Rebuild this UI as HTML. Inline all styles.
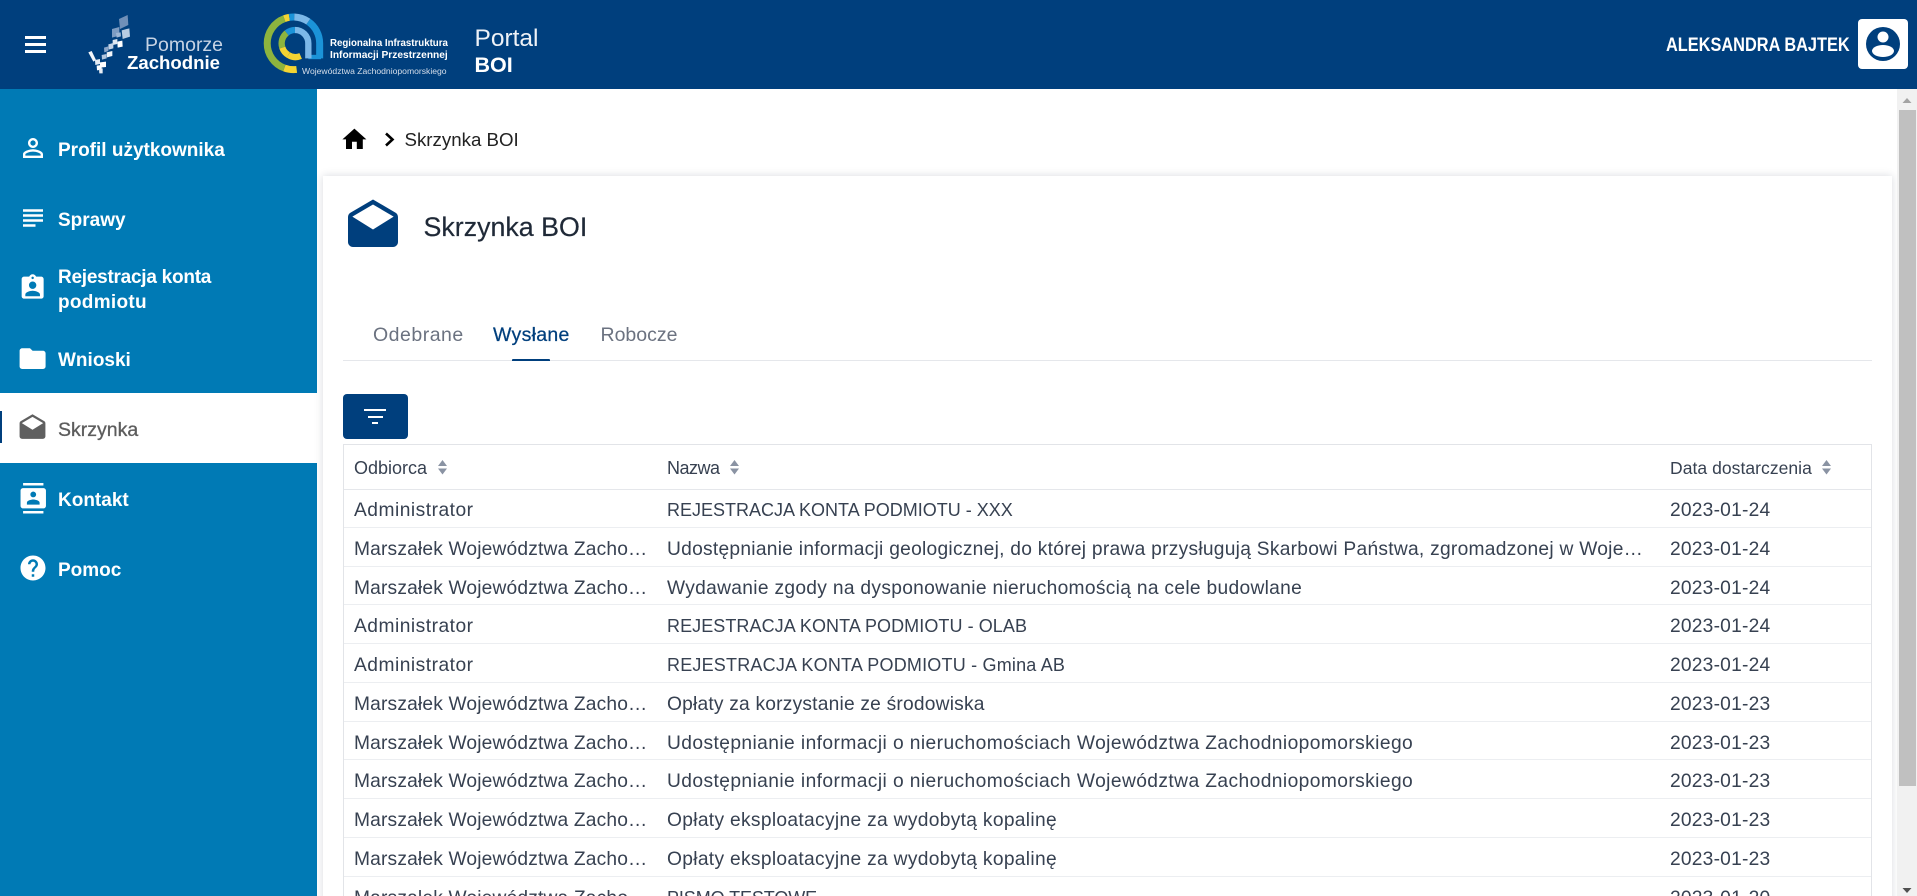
<!DOCTYPE html>
<html lang="pl"><head><meta charset="utf-8"><title>Skrzynka BOI</title>
<style>
html,body{margin:0;padding:0;width:1917px;height:896px;overflow:hidden;background:#fff;font-family:"Liberation Sans",sans-serif}
#root{position:relative;width:1917px;height:896px;overflow:hidden}
.a{position:absolute}
.t{position:absolute;white-space:nowrap;line-height:0}
header{position:absolute;left:0;top:0;width:1917px;height:89px;background:#003f7d;color:#fff}
aside{position:absolute;left:0;top:89px;width:317px;height:807px;background:#007ab5}
.n{font-size:19px;font-weight:700;color:#fff;left:58px}
.ic{position:absolute;fill:#fff}
.card{position:absolute;left:323px;top:176px;width:1569px;height:760px;background:#fff;box-shadow:0 0 8px rgba(40,50,80,.18)}
.tab{font-size:19.5px;top:335px;color:#6b7280}
.th{font-size:18px;top:468px;color:#374151}
.r{position:absolute;left:344px;width:1527px;height:38.75px;box-sizing:border-box;border-bottom:1px solid #eceef1;color:#374151}
.r span{position:absolute;top:22px;line-height:0;white-space:nowrap;font-size:19.2px}
.r .c1{left:10px;letter-spacing:.17px}.r .ad{letter-spacing:.5px}.r .c2{left:323px}.r .c3{left:1326px;letter-spacing:.22px}
.r .u{font-size:18px;top:21px}
.r .w{letter-spacing:.31px}.r .l{letter-spacing:.27px}.r .d{letter-spacing:.42px}.r .e{letter-spacing:.32px}.r .z{letter-spacing:.21px}
</style></head><body>
<div id="root">

<header>
<div class="a" style="left:25px;top:36px;width:21px;height:3px;background:#fff"></div>
<div class="a" style="left:25px;top:43px;width:21px;height:3px;background:#fff"></div>
<div class="a" style="left:25px;top:50px;width:21px;height:3px;background:#fff"></div>

<svg class="a" style="left:0;top:0" width="560" height="89">
<g transform="translate(80,5) scale(.3333)">
<polygon points="117,42 143,30 145,60 120,72" fill="#6f8fb8"/>
<polygon points="96,72 118,66 118,92 96,98" fill="#7d9cc2"/>
<polygon points="125,76 148,70 150,95 128,102" fill="#b9cce2"/>
<polygon points="108,84 122,82 123,94 110,98" fill="#9db6d4"/>
<polygon points="98,105 112,102 112,117 98,120" fill="#dfe8f2"/>
<polygon points="112,110 127,107 128,125 113,128" fill="#fff"/>
<polygon points="85,118 100,114 100,130 86,134" fill="#c3d3e6"/>
<polygon points="72,128 85,124 85,138 73,142" fill="#8aa5c8"/>
<polygon points="80,142 97,138 97,153 81,157" fill="#f2f5f9"/>
<polygon points="65,150 80,147 80,160 66,164" fill="#b3c6de"/>
<polygon points="25,142 35,138 48,165 40,170" fill="#f4f6fa"/>
<polygon points="45,165 60,162 60,177 46,180" fill="#e5ecf4"/>
<polygon points="60,172 78,170 78,186 60,188" fill="#fff"/>
<polygon points="50,182 65,180 65,194 51,196" fill="#fff"/>
<polygon points="57,192 68,190 68,205 58,205" fill="#e8eef5"/>
</g>
<g transform="translate(255,5) scale(.3333)" fill="none" stroke-width="21">
<path d="M125 193.4A79 79 0 0 1 88 189" stroke="#f4d432"/>
<path d="M88 189A79 79 0 0 1 88 41" stroke="#8db43e"/>
<path d="M88 41A79 79 0 0 1 103 37" stroke="#f4d432"/>
<path d="M103 37A79 79 0 0 1 118 36" stroke="#1b93d8"/>
<path d="M118 36A79 79 0 0 1 160 50" stroke="#7cb8e8"/>
<path d="M160 50A79 79 0 0 1 194 115V160" stroke="#1b93d8"/>
<path d="M198 156H160" stroke="#1b93d8" stroke-width="13"/>
<path d="M160 160V115A40 40 0 0 0 120 75" stroke="#7cb8e8" stroke-width="19"/>
<path d="M120 75A40 40 0 0 0 95 84" stroke="#1b93d8" stroke-width="19"/>
<path d="M95 84A40 40 0 0 0 82 128" stroke="#8db43e" stroke-width="19"/>
<path d="M82 128A40 40 0 0 0 100 150" stroke="#f4d432" stroke-width="19"/>
<path d="M100 150A40 40 0 0 0 137 153" stroke="#f4d432" stroke-width="19"/>
</g>
</svg>

<div class="t" style="left:145px;top:45px;font-size:19.5px;color:#c6d3e4">Pomorze</div>
<div class="t" style="left:127px;top:63px;font-size:18.6px;font-weight:700">Zachodnie</div>
<div class="t" style="left:330px;top:44px;font-size:9.7px;font-weight:700">Regionalna Infrastruktura</div>
<div class="t" style="left:330px;top:55.5px;font-size:10.2px;font-weight:700">Informacji Przestrzennej</div>
<div class="t" style="left:302px;top:71px;font-size:8.6px;color:#d5deea">Województwa Zachodniopomorskiego</div>
<div class="t" style="left:474.5px;top:39px;font-size:24.5px;color:#eef2f7">Portal</div>
<div class="t" style="left:474.5px;top:65px;font-size:21.5px;font-weight:700">BOI</div>

<div class="t" style="left:1666px;top:46px;font-size:19px;font-weight:700;transform:scaleX(.86);transform-origin:0 0">ALEKSANDRA BAJTEK</div>
<div class="a" style="left:1858px;top:19px;width:50px;height:50px;background:#fff;border-radius:4px">
<svg width="50" height="50"><circle cx="25" cy="25" r="17" fill="#003f7d"/><circle cx="25" cy="18" r="5.5" fill="#fff"/><ellipse cx="25" cy="32" rx="11" ry="6" fill="#fff"/></svg>
</div>
</header>

<aside></aside>
<div class="a" style="left:0;top:393px;width:317px;height:70px;background:#fff"></div>
<div class="a" style="left:0;top:411px;width:2px;height:32px;background:#003f7d"></div>

<svg class="ic" style="left:18px;top:133px" width="30" height="30" viewBox="0 0 24 24"><path d="M12 5.9c1.16 0 2.1.94 2.1 2.1s-.94 2.1-2.1 2.1S9.9 9.16 9.9 8s.94-2.1 2.1-2.1m0 9c2.97 0 6.1 1.46 6.1 2.1v1.1H5.9V17c0-.64 3.13-2.1 6.1-2.1M12 4C9.79 4 8 5.79 8 8s1.79 4 4 4 4-1.79 4-4-1.79-4-4-4zm0 9c-2.67 0-8 1.34-8 4v3h16v-3c0-2.66-5.33-4-8-4z"/></svg>
<div class="t n" style="top:150.5px">Profil użytkownika</div>
<svg class="ic" style="left:18px;top:203px" width="30" height="30" viewBox="0 0 24 24"><path d="M14 17H4v2h10v-2zm6-8H4v2h16V9zM4 15h16v-2H4v2zM4 5v2h16V5H4z"/></svg>
<div class="t n" style="top:220.5px">Sprawy</div>
<svg class="ic" style="left:18.3px;top:272.8px" width="29.3" height="29.3" viewBox="0 0 24 24"><path d="M19 3h-4.18C14.4 1.84 13.3 1 12 1c-1.3 0-2.4.84-2.82 2H5c-1.1 0-2 .9-2 2v14c0 1.1.9 2 2 2h14c1.1 0 2-.9 2-2V5c0-1.1-.9-2-2-2zm-7 0c.55 0 1 .45 1 1s-.45 1-1 1-1-.45-1-1 .45-1 1-1zm0 4c1.66 0 3 1.34 3 3s-1.34 3-3 3-3-1.34-3-3 1.34-3 3-3zm6 12H6v-1.4c0-2 4-3.1 6-3.1s6 1.1 6 3.1V19z"/></svg>
<div class="t n" style="top:278px;letter-spacing:-.25px">Rejestracja konta</div>
<div class="t n" style="top:303px;letter-spacing:.3px">podmiotu</div>
<svg class="ic" style="left:17.4px;top:342.8px" width="31.2" height="31.2" viewBox="0 0 24 24"><path d="M10 4H4c-1.1 0-1.99.9-1.99 2L2 18c0 1.1.9 2 2 2h16c1.1 0 2-.9 2-2V8c0-1.1-.9-2-2-2h-8l-2-2z"/></svg>
<div class="t n" style="top:360.5px">Wnioski</div>
<svg class="a" style="left:17.4px;top:412.7px;fill:#5f5f5f" width="31" height="31" viewBox="0 0 24 24"><path d="M21.99 8c0-.72-.37-1.35-.94-1.7L12 1 2.95 6.3C2.38 6.65 2 7.28 2 8v10c0 1.1.9 2 2 2h16c1.1 0 2-.9 2-2l-.01-10zM12 13L3.74 7.84 12 3l8.26 4.84L12 13z"/></svg>
<div class="t" style="left:58px;top:430px;font-size:19.5px;color:#5c5c5c;-webkit-text-stroke:.3px #5c5c5c">Skrzynka</div>
<svg class="ic" style="left:17.5px;top:483px" width="30.5" height="30.5" viewBox="0 0 24 24"><path d="M20 0H4v2h16V0zM4 24h16v-2H4v2zM20 4H4c-1.1 0-2 .9-2 2v12c0 1.1.9 2 2 2h16c1.1 0 2-.9 2-2V6c0-1.1-.9-2-2-2zm-8 2.75c1.24 0 2.25 1.01 2.25 2.25s-1.01 2.25-2.25 2.25S9.75 10.24 9.75 9 10.76 6.75 12 6.75zM17 17H7v-1.5c0-1.67 3.33-2.5 5-2.5s5 .83 5 2.5V17z"/></svg>
<div class="t n" style="top:500.5px">Kontakt</div>
<svg class="ic" style="left:18px;top:553px" width="30" height="30" viewBox="0 0 24 24"><path d="M12 2C6.48 2 2 6.48 2 12s4.48 10 10 10 10-4.48 10-10S17.52 2 12 2zm1 17h-2v-2h2v2zm2.07-7.75l-.9.92C13.45 12.9 13 13.5 13 15h-2v-.5c0-1.1.45-2.1 1.17-2.83l1.24-1.26c.37-.36.59-.86.59-1.41 0-1.1-.9-2-2-2s-2 .9-2 2H8c0-2.21 1.79-4 4-4s4 1.79 4 4c0 .88-.36 1.68-.93 2.25z"/></svg>
<div class="t n" style="top:570.5px">Pomoc</div>

<svg class="a" style="left:339.6px;top:125.4px" width="28.8" height="28.8" viewBox="0 0 24 24"><path d="M10 20v-6h4v6h5v-8h3L12 3 2 12h3v8z"/></svg>
<svg class="a" style="left:384px;top:132px" width="12" height="15"><path d="M2 1.5L8.5 7.5 2 13.5" fill="none" stroke="#000" stroke-width="2.6"/></svg>
<div class="t" style="left:404.5px;top:140px;font-size:18.7px;color:#222">Skrzynka BOI</div>

<div class="card"></div>
<svg class="a" style="left:343px;top:196.5px;fill:#003f7d" width="60" height="60" viewBox="0 0 24 24"><path d="M21.99 8c0-.72-.37-1.35-.94-1.7L12 1 2.95 6.3C2.38 6.65 2 7.28 2 8v10c0 1.1.9 2 2 2h16c1.1 0 2-.9 2-2l-.01-10zM12 13L3.74 7.84 12 3l8.26 4.84L12 13z"/></svg>
<div class="t" style="left:423.5px;top:227px;font-size:26.8px;color:#1f2937;-webkit-text-stroke:.2px #1f2937">Skrzynka BOI</div>

<div class="t tab" style="left:373px;letter-spacing:.5px">Odebrane</div>
<div class="t tab" style="left:493px;color:#003f7d;letter-spacing:.3px;-webkit-text-stroke:.25px #003f7d">Wysłane</div>
<div class="t tab" style="left:600.5px">Robocze</div>
<div class="a" style="left:343px;top:360px;width:1529px;height:1px;background:#e5e7eb"></div>
<div class="a" style="left:512px;top:359px;width:38px;height:2px;background:#003f7d;border-radius:1px 1px 0 0"></div>

<div class="a" style="left:343px;top:394px;width:65px;height:45px;background:#003f7d;border-radius:4px">
<div class="a" style="left:21px;top:15px;width:22px;height:2px;background:#fff"></div>
<div class="a" style="left:24.5px;top:22px;width:15px;height:2px;background:#fff"></div>
<div class="a" style="left:29px;top:28px;width:6px;height:2px;background:#fff"></div>
</div>

<div class="a" style="left:343px;top:444px;width:1527px;height:460px;border:1px solid #e2e4e8"></div>
<div class="a" style="left:344px;top:489px;width:1527px;height:1px;background:#e5e7eb"></div>
<div class="t th" style="left:354px">Odbiorca</div>
<svg class="a" style="left:438px;top:460px;fill:#8a93a3" width="10" height="15"><path d="M4.5 0L9 6H0zM0 8.5H9L4.5 14.5z"/></svg>
<div class="t th" style="left:667px;letter-spacing:-.5px">Nazwa</div>
<svg class="a" style="left:730px;top:460px;fill:#8a93a3" width="10" height="15"><path d="M4.5 0L9 6H0zM0 8.5H9L4.5 14.5z"/></svg>
<div class="t th" style="left:1670px;font-size:17.5px;letter-spacing:.05px">Data dostarczenia</div>
<svg class="a" style="left:1822px;top:460px;fill:#8a93a3" width="10" height="15"><path d="M4.5 0L9 6H0zM0 8.5H9L4.5 14.5z"/></svg>

<div class="r" style="top:489px"><span class="c1 ad">Administrator</span><span class="c2 u">REJESTRACJA KONTA PODMIOTU - XXX</span><span class="c3">2023-01-24</span></div>
<div class="r" style="top:527.75px"><span class="c1">Marszałek Województwa Zacho…</span><span class="c2 l">Udostępnianie informacji geologicznej, do której prawa przysługują Skarbowi Państwa, zgromadzonej w Woje…</span><span class="c3">2023-01-24</span></div>
<div class="r" style="top:566.5px"><span class="c1">Marszałek Województwa Zacho…</span><span class="c2 w">Wydawanie zgody na dysponowanie nieruchomością na cele budowlane</span><span class="c3">2023-01-24</span></div>
<div class="r" style="top:605.25px"><span class="c1 ad">Administrator</span><span class="c2 u" style="letter-spacing:.07px">REJESTRACJA KONTA PODMIOTU - OLAB</span><span class="c3">2023-01-24</span></div>
<div class="r" style="top:644px"><span class="c1 ad">Administrator</span><span class="c2 u" style="letter-spacing:.2px">REJESTRACJA KONTA PODMIOTU - Gmina AB</span><span class="c3">2023-01-24</span></div>
<div class="r" style="top:682.75px"><span class="c1">Marszałek Województwa Zacho…</span><span class="c2 z">Opłaty za korzystanie ze środowiska</span><span class="c3">2023-01-23</span></div>
<div class="r" style="top:721.5px"><span class="c1">Marszałek Województwa Zacho…</span><span class="c2 d">Udostępnianie informacji o nieruchomościach Województwa Zachodniopomorskiego</span><span class="c3">2023-01-23</span></div>
<div class="r" style="top:760.25px"><span class="c1">Marszałek Województwa Zacho…</span><span class="c2 d">Udostępnianie informacji o nieruchomościach Województwa Zachodniopomorskiego</span><span class="c3">2023-01-23</span></div>
<div class="r" style="top:799px"><span class="c1">Marszałek Województwa Zacho…</span><span class="c2 e">Opłaty eksploatacyjne za wydobytą kopalinę</span><span class="c3">2023-01-23</span></div>
<div class="r" style="top:837.75px"><span class="c1">Marszałek Województwa Zacho…</span><span class="c2 e">Opłaty eksploatacyjne za wydobytą kopalinę</span><span class="c3">2023-01-23</span></div>
<div class="r" style="top:876.5px"><span class="c1">Marszałek Województwa Zacho…</span><span class="c2 u" style="letter-spacing:-.1px">PISMO TESTOWE</span><span class="c3">2023-01-20</span></div>

<div class="a" style="left:1897px;top:89px;width:20px;height:807px;background:#f1f1f1"></div>
<div class="a" style="left:1899px;top:110px;width:17px;height:676px;background:#c0c0c0"></div>
<svg class="a" style="left:1897px;top:89px" width="20" height="807"><path d="M10 9L14.5 14H5.5z" fill="#a3a3a3"/><path d="M5.5 799H14.5L10 804z" fill="#505050"/></svg>
</div>
</body></html>
